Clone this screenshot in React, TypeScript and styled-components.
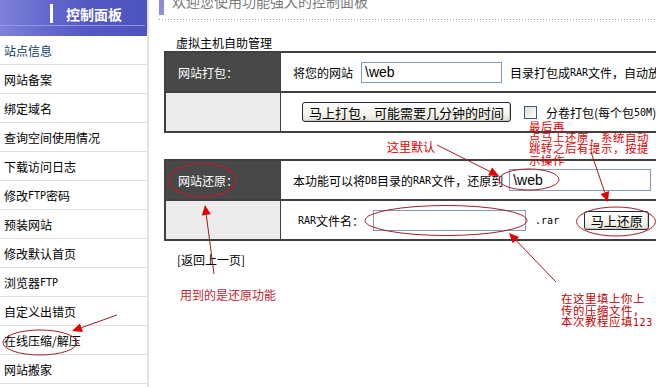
import React from "react";
import styled, { createGlobalStyle } from "styled-components";

const GlobalStyle = createGlobalStyle`
  html, body { margin: 0; padding: 0; background: #fff; overflow: hidden; }
  body {
    font-family: "Noto Sans CJK SC", "Liberation Sans", sans-serif;
    font-size: 12px;
    color: #000;
  }
`;

const Page = styled.div`
  position: relative;
  display: flex;
  width: 656px;
  height: 387px;
  overflow: hidden;
  background: #fff;
`;

/* half-width latin runs, like the bitmap CJK font of the reference */
const Half = styled.span`
  font-family: "DejaVu Sans Mono", "Liberation Mono", monospace;
  font-size: 10px;
`;

function withHalf(text: string) {
  return text.split(/([A-Za-z0-9.]+)/).map((part, i) =>
    /^[A-Za-z0-9.]+$/.test(part) ? <Half key={i}>{part}</Half> : <React.Fragment key={i}>{part}</React.Fragment>
  );
}

/* ---------- sidebar ---------- */
const Sidebar = styled.aside`
  flex: 0 0 147px;
  border-right: 2px solid #e2e2e2;
  display: flex;
  flex-direction: column;
`;

const SideHeader = styled.div`
  height: 36px;
  display: flex;
  align-items: flex-start;
  background:
    linear-gradient(180deg, transparent 25px, #9094e2 25px, #9094e2 26px, transparent 26px) 0 0 / 145px 36px no-repeat,
    linear-gradient(90deg, #7e82d9 0%, #6569cd 30%, #5358c3 60%, #4e54bf 100%);
`;

const HeaderMark = styled.span`
  width: 3px;
  height: 19px;
  margin: 4px 0 0 50px;
  background: #fff;
`;

const HeaderTitle = styled.span`
  margin: 6px 0 0 13px;
  color: #fff;
  font-size: 14px;
  font-weight: bold;
  line-height: 16px;
`;

const NavItem = styled.div<{ $active?: boolean }>`
  height: 28px;
  border-bottom: 1px solid #e0e0e0;
  padding-left: 4px;
  display: flex;
  align-items: center;
  white-space: nowrap;
  color: ${(p) => (p.$active ? "#0d3a72" : "#000")};
`;

/* ---------- main ---------- */
const Main = styled.main`
  flex: 1;
  min-width: 0;
  padding-left: 10px;
  display: flex;
  flex-direction: column;
  align-items: flex-start;
`;

const TitleBar = styled.div`
  align-self: stretch;
  margin-top: -8px;
  height: 23px;
  padding-bottom: 5px;
  display: flex;
  gap: 8px;
  background: linear-gradient(90deg, #9a9a9a 1px, transparent 1px) left bottom / 3px 1px repeat-x;
`;

const TitleMark = styled.span`
  width: 5px;
  background: #8b8fd9;
`;

const TitleText = styled.h1`
  margin: 2px 0 0;
  font-size: 14px;
  font-weight: normal;
  line-height: 14px;
  color: #7a7a7a;
  white-space: nowrap;
`;

const SectionTitle = styled.h2`
  margin: 17px 0 0 17px;
  font-size: 12px;
  font-weight: normal;
  line-height: 12px;
  color: #000;
`;

const Panel = styled.div<{ $top: number }>`
  flex-shrink: 0;
  margin: ${(p) => p.$top}px 0 0 5px;
  width: 520px;
  display: grid;
  grid-template-columns: 114px 1fr;
  grid-auto-rows: 38px;
  gap: 2px 1px;
  border: 2px solid #404040;
  background: #404040;
`;

const LabelCell = styled.div<{ $dark?: boolean }>`
  background: ${(p) => (p.$dark ? "#484848" : "#ececec")};
  color: #fff;
  display: flex;
  align-items: center;
  padding-left: 12px;
  white-space: nowrap;
`;

const BodyCell = styled.div<{ $indent: number }>`
  background: #fff;
  display: flex;
  align-items: center;
  padding-left: ${(p) => p.$indent}px;
  white-space: nowrap;
  overflow: hidden;
`;

const Gap = styled.span<{ $w: number }>`
  flex: 0 0 ${(p) => p.$w}px;
`;

const TextInput = styled.input<{ $w: number; $h: number }>`
  box-sizing: border-box;
  flex: 0 0 ${(p) => p.$w}px;
  width: ${(p) => p.$w}px;
  height: ${(p) => p.$h}px;
  border: 1px solid #7f9db9;
  padding: 0 3px;
  margin: 0;
  font-family: "Liberation Sans", sans-serif;
  font-size: 14px;
  color: #000;
  background: #fff;
  outline: none;
`;

const XPButton = styled.button<{ $w: number; $h: number }>`
  box-sizing: border-box;
  flex: 0 0 ${(p) => p.$w}px;
  width: ${(p) => p.$w}px;
  height: ${(p) => p.$h}px;
  padding: 0;
  margin: 0;
  border: 1px solid #1f2b3b;
  border-radius: 3px;
  background: linear-gradient(180deg, #ffffff 0%, #f5f4ef 60%, #e3e0d5 100%);
  font-family: "Noto Sans CJK SC", sans-serif;
  font-size: 13px;
  line-height: 1;
  color: #000;
  box-shadow: inset -1px -1px 0 #cfcabb;
`;

const CheckBox = styled.input`
  appearance: none;
  box-sizing: border-box;
  flex: 0 0 13px;
  width: 13px;
  height: 13px;
  margin: 0;
  border: 1px solid #3a5a80;
  background: linear-gradient(135deg, #dcdcd7, #ffffff);
`;

const BackLink = styled.a`
  margin: 13px 0 0 18px;
  line-height: 12px;
  color: #000;
  text-decoration: none;
`;

/* ---------- annotations ---------- */
const Overlay = styled.svg`
  position: absolute;
  left: 0;
  top: 0;
  width: 656px;
  height: 387px;
  pointer-events: none;
`;

const Note = styled.div<{ $x: number; $y: number; $color: string; $lh?: number }>`
  position: absolute;
  left: ${(p) => p.$x}px;
  top: ${(p) => p.$y}px;
  color: ${(p) => p.$color};
  font-size: ${(p) => (p.$lh ? 11.4 : 12)}px;
  letter-spacing: ${(p) => (p.$lh ? 0.6 : 0)}px;
  line-height: ${(p) => p.$lh ?? 12}px;
  white-space: nowrap;
  pointer-events: none;
`;

const NoteLine = styled.div``;

function Arrow({ x1, y1, x2, y2 }: { x1: number; y1: number; x2: number; y2: number }) {
  const dx = x2 - x1;
  const dy = y2 - y1;
  const len = Math.hypot(dx, dy);
  const ux = dx / len;
  const uy = dy / len;
  const L = 10;
  const W = 4.5;
  const bx = x2 - ux * L;
  const by = y2 - uy * L;
  const pts = `${x2},${y2} ${bx - uy * W},${by + ux * W} ${bx + uy * W},${by - ux * W}`;
  return (
    <g>
      <line x1={x1} y1={y1} x2={bx} y2={by} stroke="#9e1c22" strokeWidth={1} />
      <polygon points={pts} fill="#e00000" />
    </g>
  );
}

const navItems = [
  "站点信息",
  "网站备案",
  "绑定域名",
  "查询空间使用情况",
  "下载访问日志",
  "修改FTP密码",
  "预装网站",
  "修改默认首页",
  "浏览器FTP",
  "自定义出错页",
  "在线压缩/解压",
  "网站搬家",
];

const tipLines = ["最后再", "点马上还原，系统自动", "跳转之后有提示，按提", "示操作"];
const uploadLines = ["在这里填上你上", "传的压缩文件，", "本次教程应填123"];

export default function App() {
  return (
    <>
      <GlobalStyle />
      <Page>
        <Sidebar>
          <SideHeader>
            <HeaderMark />
            <HeaderTitle>控制面板</HeaderTitle>
          </SideHeader>
          {navItems.map((t, i) => (
            <NavItem key={t} $active={i === 0}>
              {withHalf(t)}
            </NavItem>
          ))}
        </Sidebar>

        <Main>
          <TitleBar>
            <TitleMark />
            <TitleText>欢迎您使用功能强大的控制面板</TitleText>
          </TitleBar>
          <SectionTitle>虚拟主机自助管理</SectionTitle>

          <Panel $top={2}>
            <LabelCell $dark>网站打包：</LabelCell>
            <BodyCell $indent={12}>
              将您的网站
              <Gap $w={8} />
              <TextInput $w={141} $h={21} defaultValue="\web" />
              <Gap $w={8} />
              {withHalf("目录打包成RAR文件，自动放在DB目录下")}
            </BodyCell>
            <LabelCell />
            <BodyCell $indent={21}>
              <XPButton $w={209} $h={20}>马上打包，可能需要几分钟的时间</XPButton>
              <Gap $w={13} />
              <CheckBox type="checkbox" />
              <Gap $w={9} />
              {withHalf("分卷打包(每个包50M)")}
            </BodyCell>
          </Panel>

          <Panel $top={26}>
            <LabelCell $dark>网站还原：</LabelCell>
            <BodyCell $indent={12}>
              {withHalf("本功能可以将DB目录的RAR文件，还原到")}
              <Gap $w={6} />
              <TextInput $w={142} $h={22} defaultValue="\web" />
            </BodyCell>
            <LabelCell />
            <BodyCell $indent={17}>
              {withHalf("RAR文件名：")}
              <Gap $w={9} />
              <TextInput $w={153} $h={21} defaultValue="" />
              <Gap $w={9} />
              <Half>.rar</Half>
              <Gap $w={25} />
              <XPButton $w={65} $h={19}>马上还原</XPButton>
            </BodyCell>
          </Panel>

          <BackLink href="#">[返回上一页]</BackLink>
        </Main>

        <Overlay viewBox="0 0 656 387">
          <ellipse cx={202.5} cy={180} rx={33} ry={16.5} fill="none" stroke="#9a2a36" strokeWidth={1.6} />
          <ellipse cx={529} cy={179.5} rx={30} ry={10.5} fill="none" stroke="#a0222c" strokeWidth={1} />
          <ellipse cx={446} cy={220.5} rx={81} ry={15} fill="none" stroke="#a0222c" strokeWidth={1} />
          <ellipse cx={616} cy={221.5} rx={39.5} ry={14.5} fill="none" stroke="#a0222c" strokeWidth={1} />
          <ellipse cx={40} cy={342.5} rx={37} ry={12.5} fill="none" stroke="#a0222c" strokeWidth={1} />
          <Arrow x1={437} y1={145} x2={499} y2={176} />
          <Arrow x1={591} y1={152} x2={608} y2={202} />
          <Arrow x1={556} y1={282} x2={509} y2={233} />
          <Arrow x1={214} y1={274} x2={205} y2={205} />
          <Arrow x1={117} y1={315} x2={72} y2={331} />
        </Overlay>

        <Note $x={387} $y={141} $color="#e00000">这里默认</Note>
        <Note $x={529} $y={121} $color="#e00000" $lh={11.2}>
          {tipLines.map((l) => (
            <NoteLine key={l}>{l}</NoteLine>
          ))}
        </Note>
        <Note $x={180} $y={289} $color="#c0262c">用到的是还原功能</Note>
        <Note $x={561} $y={293} $color="#c00000" $lh={11.5}>
          {uploadLines.map((l) => (
            <NoteLine key={l}>{withHalf(l)}</NoteLine>
          ))}
        </Note>
      </Page>
    </>
  );
}
